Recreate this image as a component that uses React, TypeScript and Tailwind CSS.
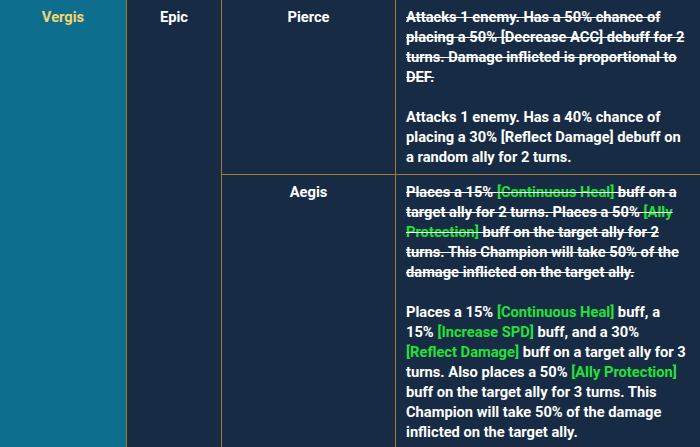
const G = ({ children }: { children: React.ReactNode }) => (
  <span className="text-[#22e23a]">{children}</span>
);

const Row = ({
  skill,
  old,
  current,
  last,
}: {
  skill: string;
  old: React.ReactNode;
  current: React.ReactNode;
  last?: boolean;
}) => (
  <div className={`flex ${last ? "" : "border-b border-[#a27a2c]"}`}>
    <div className="w-[174px] shrink-0 border-r border-[#a27a2c] px-[10px] py-[7px] text-center">
      {skill}
    </div>
    <div className="flex-1 px-[10px] py-[7px]">
      <p className="line-through">{old}</p>
      <p className="mt-5">{current}</p>
    </div>
  </div>
);

export default function App() {
  return (
    <div
      className="flex h-[447px] w-[700px] overflow-hidden bg-[#172c44] text-[14.7px] leading-5 font-bold text-white"
      style={{ fontFamily: "Roboto, 'Liberation Sans', sans-serif" }}
    >
      <div className="w-[127px] shrink-0 border-r border-[#a27a2c] bg-[#0e6e8d] py-[7px] text-center text-[#f2d66e]">
        Vergis
      </div>
      <div className="w-[95px] shrink-0 border-r border-[#a27a2c] py-[7px] text-center">
        Epic
      </div>
      <div className="flex flex-1 flex-col">
        <Row
          skill="Pierce"
          old={
            <>
              Attacks 1 enemy. Has a 50% chance of placing a 50% [Decrease ACC] debuff for 2
              turns. Damage inflicted is proportional to DEF.
            </>
          }
          current={
            <>
              Attacks 1 enemy. Has a 40% chance of placing a 30% [Reflect Damage] debuff on a
              random ally for 2 turns.
            </>
          }
        />
        <Row
          last
          skill="Aegis"
          old={
            <>
              Places a 15% <G>[Continuous Heal]</G> buff on a target ally for 2 turns. Places a
              50% <G>[Ally Protection]</G> buff on the target ally for 2 turns. This Champion will
              take 50% of the damage inflicted on the target ally.
            </>
          }
          current={
            <>
              Places a 15% <G>[Continuous Heal]</G> buff, a 15% <G>[Increase SPD]</G> buff, and a
              30% <G>[Reflect Damage]</G> buff on a target ally for 3 turns. Also places a 50%{" "}
              <G>[Ally Protection]</G> buff on the target ally for 3 turns. This Champion will take
              50% of the damage inflicted on the target ally.
            </>
          }
        />
      </div>
    </div>
  );
}
